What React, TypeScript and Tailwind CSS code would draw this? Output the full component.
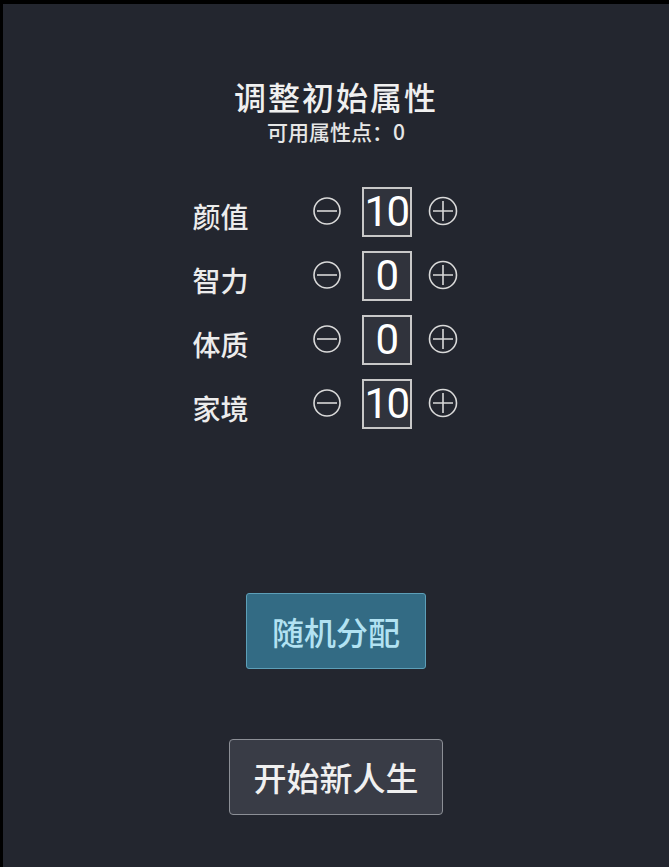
import { useState } from "react";

const cjk = { fontFamily: '"Noto Sans CJK SC", "Noto Sans", sans-serif' };

function MinusIcon() {
  return (
    <svg width="28" height="28" viewBox="0 0 28 28" fill="none" stroke="#d9d9d9" strokeWidth="1.6">
      <circle cx="14" cy="14" r="13" />
      <path d="M4 14h20" />
    </svg>
  );
}

function PlusIcon() {
  return (
    <svg width="30" height="30" viewBox="0 0 30 30" fill="none" stroke="#d9d9d9" strokeWidth="1.6">
      <circle cx="15" cy="15" r="13.5" />
      <path d="M5 15h20M15 5v20" />
    </svg>
  );
}

const initial = [
  { name: "颜值", value: 10 },
  { name: "智力", value: 0 },
  { name: "体质", value: 0 },
  { name: "家境", value: 10 },
];

export default function App() {
  const [attrs, setAttrs] = useState(initial);
  const total = 20;
  const left = total - attrs.reduce((s, a) => s + a.value, 0);

  const change = (i: number, d: number) => {
    setAttrs((prev) =>
      prev.map((a, j) => {
        if (j !== i) return a;
        const v = a.value + d;
        if (v < 0 || v > 10) return a;
        if (d > 0 && left <= 0) return a;
        return { ...a, value: v };
      })
    );
  };

  return (
    <div className="h-[867px] w-[669px] bg-black pt-[4px] pl-[3px] overflow-hidden">
      <div className="h-full w-full bg-[#23262f] flex flex-col items-center pt-[74px]" style={cjk}>
        <h1 className="text-[32px] leading-[36px] tracking-[2px] text-[#f0f0f0] font-medium">调整初始属性</h1>
        <p className="mt-[6px] text-[21px] leading-[22px] text-[#e6e6e6] font-medium">可用属性点：{left}</p>

        <div className="mt-[45px] w-[287px] flex flex-col gap-[14px] pr-[22px]">
          {attrs.map((a, i) => (
            <div key={a.name} className="flex items-center h-[50px]">
              <span className="w-[120px] pt-[8px] text-[28px] leading-none text-[#ececec] font-medium">{a.name}</span>
              <button onClick={() => change(i, -1)} className="w-[28px] h-[28px] -mt-[2px]">
                <MinusIcon />
              </button>
              <div
                className="ml-[21px] w-[50px] h-[50px] border-2 border-[#c8c8c8] bg-[#30333c] flex items-center justify-center text-[42px] leading-none text-white tracking-[-1.5px]"
                style={{ fontFamily: 'Roboto, "Noto Sans", sans-serif' }}
              >
                {a.value}
              </div>
              <button onClick={() => change(i, 1)} className="ml-[16px] w-[30px] h-[30px] -mt-[2px]">
                <PlusIcon />
              </button>
            </div>
          ))}
        </div>

        <button className="mt-[164px] w-[180px] h-[76px] rounded-[3px] border border-[#5d9fb8] bg-[#336b84] text-[32px] text-[#b2e2f2] leading-none font-medium">
          随机分配
        </button>

        <button className="mt-[70px] w-[214px] h-[76px] rounded-[4px] border-[1.5px] border-[#8c8f96] bg-[#393c46] text-[33px] text-[#f0f0f0] leading-none font-medium">
          开始新人生
        </button>
      </div>
    </div>
  );
}
